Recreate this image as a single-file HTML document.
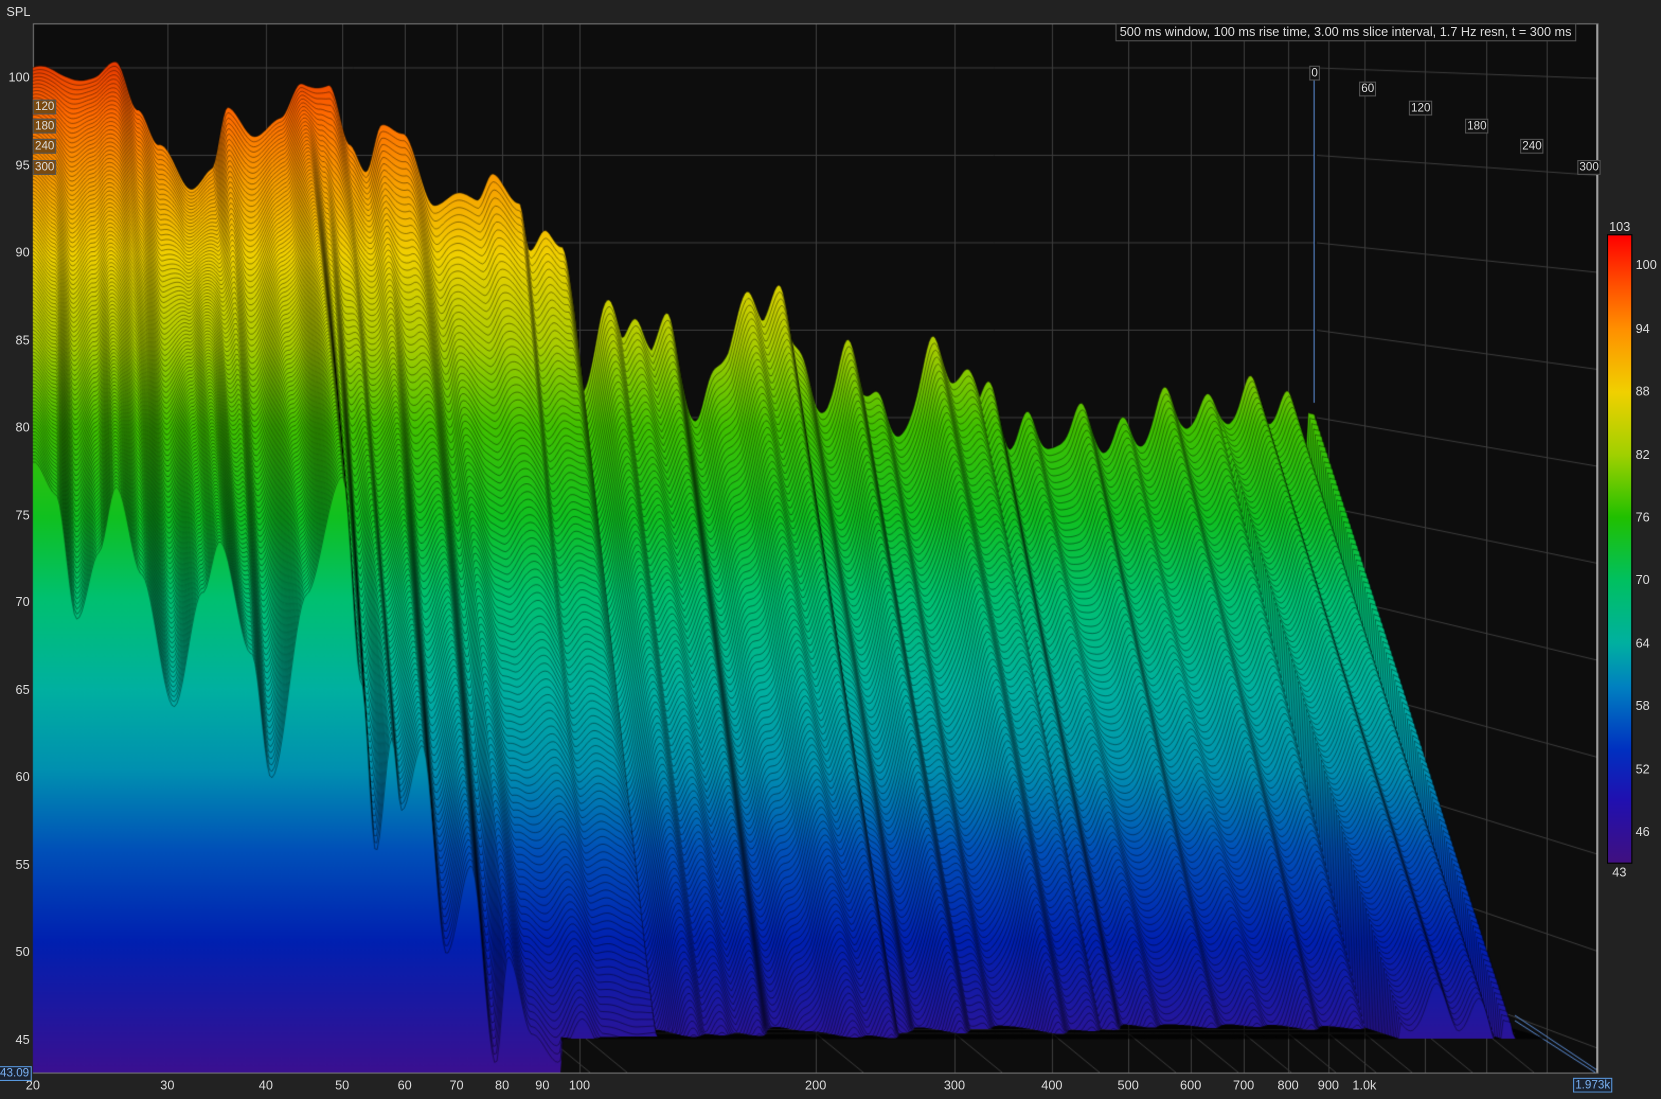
<!DOCTYPE html>
<html><head><meta charset="utf-8"><style>
html,body{margin:0;padding:0;background:#222;overflow:hidden;width:1661px;height:1099px}
#w{position:absolute;left:0;top:0;width:1568px;height:1037px;transform:scale(1.05931,1.05979);transform-origin:0 0;font-family:"Liberation Sans",sans-serif;color:#ddd}
.t{position:absolute;font-size:12px;white-space:nowrap}
.yl{position:absolute;right:1540px;font-size:12px;color:#ddd}
.xl{position:absolute;top:1017px;font-size:12px;transform:translateX(-50%)}
.cb{position:absolute;left:1544px;font-size:12px}
.bx{position:absolute;font-size:11px;border:1px solid #555;background:#111;padding:0 1px;line-height:12px}
canvas{position:absolute;left:0;top:0}
</style></head><body><div id="w">
<canvas id="c" width="1568" height="1037"></canvas>
<div class="t" style="left:6px;top:4px">SPL</div>
<div class="bx" style="left:1053px;top:22px;font-size:12px;line-height:15px;padding:0 3px;background:#0d0d0d">500 ms window, 100 ms rise time, 3.00 ms slice interval, 1.7 Hz resn, t = 300 ms</div>
<div class="yl" style="top:66px">100</div><div class="yl" style="top:149px">95</div><div class="yl" style="top:231px">90</div><div class="yl" style="top:314px">85</div><div class="yl" style="top:396px">80</div><div class="yl" style="top:479px">75</div><div class="yl" style="top:561px">70</div><div class="yl" style="top:644px">65</div><div class="yl" style="top:726px">60</div><div class="yl" style="top:809px">55</div><div class="yl" style="top:891px">50</div><div class="yl" style="top:974px">45</div>
<div class="xl" style="left:31px">20</div><div class="xl" style="left:158px">30</div><div class="xl" style="left:251px">40</div><div class="xl" style="left:323px">50</div><div class="xl" style="left:382px">60</div><div class="xl" style="left:431px">70</div><div class="xl" style="left:474px">80</div><div class="xl" style="left:512px">90</div><div class="xl" style="left:547px">100</div><div class="xl" style="left:770px">200</div><div class="xl" style="left:901px">300</div><div class="xl" style="left:993px">400</div><div class="xl" style="left:1065px">500</div><div class="xl" style="left:1124px">600</div><div class="xl" style="left:1174px">700</div><div class="xl" style="left:1216px">800</div><div class="xl" style="left:1254px">900</div><div class="xl" style="left:1288px">1.0k</div>
<div class="bx" style="left:-2px;top:1006px;border-color:#5a9ae0;color:#7ab0f0;background:#1a2230">43.09</div>
<div class="bx" style="left:1485px;top:1017px;border-color:#5a9ae0;color:#7ab0f0;background:#1a2230">1.973k</div>
<div class="bx" style="left:31px;top:94px;background:#7a4a10">120</div><div class="bx" style="left:31px;top:112px;background:#7a4a10">180</div><div class="bx" style="left:31px;top:131px;background:#7a4a10">240</div><div class="bx" style="left:31px;top:151px;background:#7a4a10">300</div>
<div class="bx" style="left:1236px;top:62px">0</div><div class="bx" style="left:1283px;top:77px">60</div><div class="bx" style="left:1330px;top:95px">120</div><div class="bx" style="left:1383px;top:112px">180</div><div class="bx" style="left:1435px;top:131px">240</div><div class="bx" style="left:1489px;top:151px">300</div>
<div style="position:absolute;left:1517px;top:221px;width:22px;height:592px;border:1px solid #000;background:linear-gradient(#ff0000 0%,#ff5000 8%,#ff9000 15%,#f0d000 25%,#a0d000 35%,#20c000 45%,#00c060 55%,#00b0a0 65%,#0080c0 72%,#0030c0 82%,#2010b0 90%,#401080 100%)"></div>
<div class="cb" style="left:1519px;top:207px">103</div><div class="cb" style="top:243px">100</div><div class="cb" style="top:303px">94</div><div class="cb" style="top:362px">88</div><div class="cb" style="top:422px">82</div><div class="cb" style="top:481px">76</div><div class="cb" style="top:540px">70</div><div class="cb" style="top:600px">64</div><div class="cb" style="top:659px">58</div><div class="cb" style="top:719px">52</div><div class="cb" style="top:778px">46</div><div class="cb" style="left:1522px;top:816px">43</div>
</div>
<script>
var c=document.getElementById('c'),g=c.getContext('2d');
var L=31,T=22,R=1508,B=1012;
g.fillStyle='#0d0d0d';g.fillRect(L,T,R-L,B-T);
g.strokeStyle='#3c3c3c';g.lineWidth=1;
var xs=[31,158,251,323,382,431,474,512,547,770,901,993,1065,1124,1174,1216,1254,1288,1345,1403,1460];
xs.forEach(function(x){g.beginPath();g.moveTo(x+.5,T);g.lineTo(x+.5,B);g.stroke();});
for(var i=0;i<12;i++){var y=64+i*82.5;g.beginPath();g.moveTo(L,y);g.lineTo(1241,y);g.stroke();}
for(var i=0;i<11;i++){var y=64+i*82.5;g.beginPath();g.moveTo(1243,y);g.lineTo(R,y+10+i*9);g.stroke();}
g.beginPath();g.moveTo(31,975);g.lineTo(1430,975);g.stroke();
xs.forEach(function(x){if(x>470&&x<1430){g.beginPath();g.moveTo(x,975);g.lineTo(x+45,B);g.stroke();}});
g.strokeStyle='#5a8ad0';g.beginPath();g.moveTo(1240.5,64);g.lineTo(1240.5,380);g.stroke();
g.beginPath();g.moveTo(1430,958);g.lineTo(1508,1010);g.moveTo(1430,963);g.lineTo(1506,1012);g.stroke();
g.strokeStyle='#ccc';g.beginPath();g.moveTo(1507.5,22);g.lineTo(1507.5,1012);g.stroke();
g.strokeStyle='#777';g.strokeRect(L+.5,T+.5,R-L,B-T);
var P=[[31,65],[60,70],[90,75],[110,60],[130,100],[150,140],[180,175],[200,160],[215,105],[240,125],[265,115],[285,78],[310,80],[330,140],[345,160],[360,115],[380,130],[410,190],[430,185],[450,190],[465,160],[490,195],[500,240],[515,215],[530,230],[550,330],[570,280],[600,300],[630,295],[660,370],[700,275],[735,268],[770,360],[800,320],[840,380],[885,315],[920,350],[960,390],[1020,380],[1060,395],[1100,365],[1140,370],[1180,355],[1215,370],[1240,390],[1252,470],[1262,700],[1270,990]];
var Q=[[31,436],[50,470],[67,581],[85,520],[99,463],[120,540],[147,668],[170,560],[184,507],[210,620],[226,735],[255,560],[285,450],[300,640],[312,803],[325,700],[333,768],[350,700],[370,900],[390,820],[410,1000],[420,900],[440,980],[460,1000],[480,960],[500,1000],[545,1000]];
function interp(A,x){for(var i=0;i<A.length-1;i++){if(x<=A[i+1][0]){var a=A[i],b=A[i+1],t=(x-a[0])/(b[0]-a[0]);t=t*t*(3-2*t);return a[1]+(b[1]-a[1])*t;}}return A[A.length-1][1];}
var RP=[575,600,630,670,705,735,760,800,830,880,915,935,970,1020,1060,1100,1140,1180,1215];
function ridge(x){var m=0;RP.forEach(function(p){var v=Math.exp(-Math.pow((x-p)/11,2));if(v>m)m=v;});return m;}
var grad=g.createLinearGradient(0,60,0,1012);
[[0,'#e83a00'],[0.05,'#ff6a00'],[0.12,'#f7a000'],[0.19,'#f0d000'],[0.28,'#a8cc00'],[0.36,'#40c000'],[0.45,'#10c020'],[0.53,'#00c070'],[0.62,'#00b0a0'],[0.7,'#0090b0'],[0.78,'#0050b8'],[0.87,'#0020b0'],[1,'#3a1090']].forEach(function(s){grad.addColorStop(s[0],s[1]);});
g.save();g.beginPath();g.rect(L,T,R-L,B-T);g.clip();
var N=110,SH=185;
for(var k=0;k<=N;k++){
 var f=k/N;var yF=925+f*55;var pts=[];
 for(var x=31;x<=1272;x+=2){
  var base=interp(P,x),y;
  if(x<545){
   y=base*(1-f)+interp(Q,x)*f+4*Math.sin(x/9+f*6);
  }else{
   var r=ridge(x);
   if(x<1235)base+=40*(1-r);
   var D=x>1150?480:620;
   y=base+f*(D+93)+1.5*Math.sin(x/5+f*6);
  }
  var sx=x+f*SH*(x-31)/1210;
  var bot=x<465?B:yF;
  if(y>bot)y=bot;
  pts.push([sx,y,bot]);
 }
 g.beginPath();g.moveTo(pts[0][0],pts[0][1]);
 for(var i=1;i<pts.length;i++)g.lineTo(pts[i][0],pts[i][1]);
 for(var i=pts.length-1;i>=0;i--)g.lineTo(pts[i][0],pts[i][2]);
 g.closePath();g.fillStyle=grad;g.fill();
 g.beginPath();g.moveTo(pts[0][0],pts[0][1]);
 for(var i=1;i<pts.length;i++)g.lineTo(pts[i][0],pts[i][1]);
 g.strokeStyle='rgba(0,0,0,0.6)';g.lineWidth=0.7;g.stroke();
}
g.restore();
</script>
</body></html>
